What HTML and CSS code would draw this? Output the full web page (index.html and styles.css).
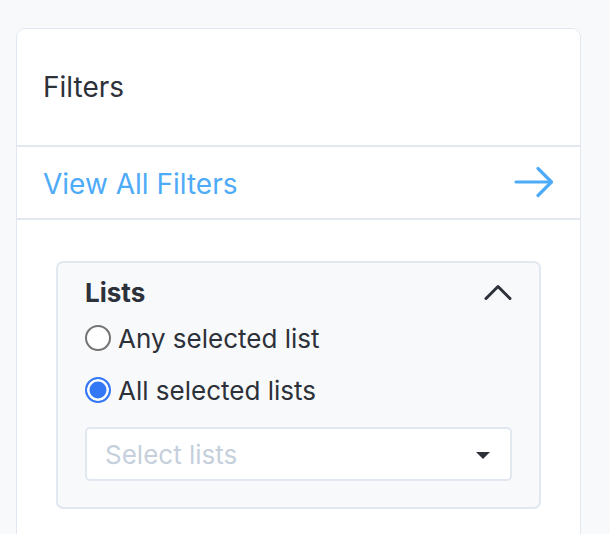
FILE: index.html
```html
<!DOCTYPE html>
<html>
<head>
<meta charset="utf-8">
<link rel="stylesheet" href="styles.css">
</head>
<body>
<div class="card">
  <div class="card-header">Filters</div>
  <a class="view-all" href="#">
    <span>View All Filters</span>
    <svg class="arrow" width="40" height="32" viewBox="0 0 40 32" fill="none" stroke="#4dabf7" stroke-width="3.2" stroke-linecap="round" stroke-linejoin="round">
      <path d="M2 16 H37"/>
      <path d="M24 2.5 L37.5 16 L24 29.5"/>
    </svg>
  </a>
  <div class="card-body">
    <div class="filter-box">
      <div class="filter-title">
        <span>Lists</span>
        <svg class="chevron" width="28" height="18" viewBox="0 0 28 18" fill="none" stroke="#2d3139" stroke-width="3" stroke-linecap="round" stroke-linejoin="round">
          <path d="M2 15.5 L14 3.5 L26 15.5"/>
        </svg>
      </div>
      <label class="radio-row"><span class="radio"></span><span>Any selected list</span></label>
      <label class="radio-row"><span class="radio checked"></span><span>All selected lists</span></label>
      <div class="select">
        <span class="placeholder">Select lists</span>
        <span class="caret"></span>
      </div>
    </div>
  </div>
</div>
</body>
</html>
```
FILE: styles.css
```css
html, body {
  margin: 0;
  background: #f8f9fb;
  font-family: Inter, "Noto Sans", sans-serif;
  color: #2d3139;
}
html {
  overflow: hidden;
}
body {
  padding: 28px 29px 0 16px;
  height: 534px;
  box-sizing: border-box;
  overflow: hidden;
}
.card {
  background: #fff;
  border: 1px solid #e2e8f0;
  border-bottom: none;
  border-radius: 9px 9px 0 0;
  height: 506px;
  box-sizing: border-box;
  overflow: hidden;
}
.card-header {
  height: 118px;
  border-bottom: 2px solid #e2e8f0;
  box-sizing: border-box;
  display: flex;
  align-items: center;
  padding: 0 26px;
  font-size: 28px;
  color: #2d3139;
}
.view-all {
  height: 73px;
  border-bottom: 2px solid #e2e8f0;
  box-sizing: border-box;
  display: flex;
  align-items: center;
  justify-content: space-between;
  padding: 2px 26px 0 26px;
  font-size: 28px;
  color: #4dabf7;
  text-decoration: none;
}
.arrow {
  display: block;
  margin-top: -4px;
}
.card-body {
  padding: 41px 39px 0 39px;
}
.filter-box {
  background: #f8f9fb;
  border: 2px solid #e2e8f0;
  border-radius: 7px;
  padding: 13px 27px 26px 27px;
}
.filter-title {
  display: flex;
  align-items: center;
  justify-content: space-between;
  height: 32px;
  font-size: 26px;
  font-weight: 700;
}
.chevron {
  display: block;
}
.radio-row {
  display: flex;
  align-items: center;
  gap: 7px;
  height: 40px;
  font-size: 26px;
  margin-top: 12px;
}
.radio-row:first-of-type {
  margin-top: 10px;
}
.radio {
  width: 26px;
  height: 26px;
  box-sizing: border-box;
  border: 2px solid #737373;
  border-radius: 50%;
  background: #fff;
  flex: none;
}
.radio.checked {
  border: 2px solid #3478f6;
  background: #3478f6;
  box-shadow: inset 0 0 0 2.5px #fff;
}
.select {
  margin-top: 17px;
  height: 54px;
  box-sizing: border-box;
  background: #fff;
  border: 2px solid #e2e8f0;
  border-radius: 5px;
  display: flex;
  align-items: center;
  justify-content: space-between;
  padding: 0 20px 0 18px;
}
.placeholder {
  font-size: 26px;
  color: #c5d0dc;
}
.caret {
  width: 0;
  height: 0;
  border-left: 7.5px solid transparent;
  border-right: 7.5px solid transparent;
  border-top: 7.5px solid #2d3139;
  margin-top: 2px;
}
```
